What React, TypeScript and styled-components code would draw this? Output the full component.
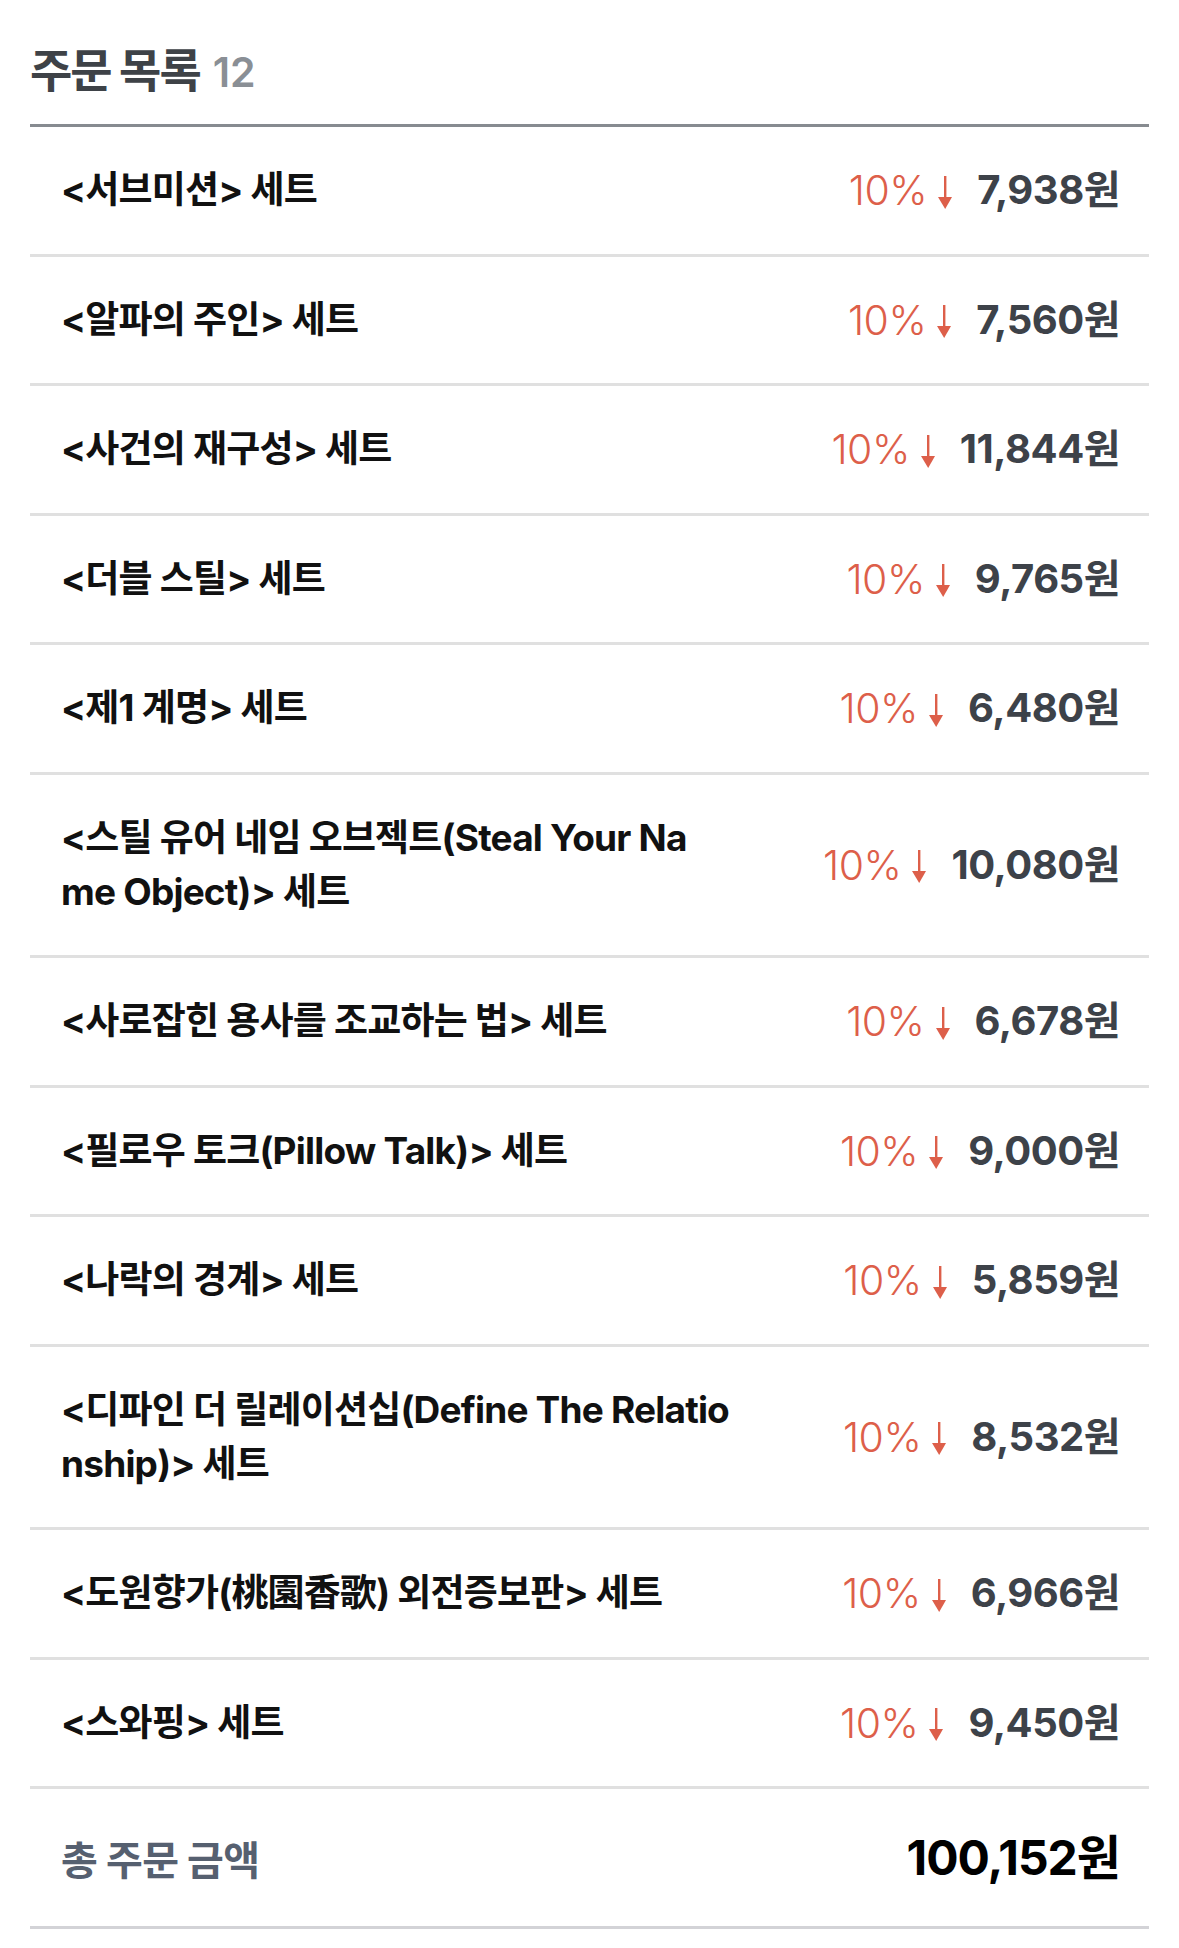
import React from "react";
import styled, { createGlobalStyle } from "styled-components";

const GlobalStyle = createGlobalStyle`
  html, body {
    margin: 0;
    padding: 0;
    background: #ffffff;
  }
  body {
    font-family: Inter, "Noto Sans CJK KR", sans-serif;
    -webkit-font-smoothing: antialiased;
  }
`;

const Page = styled.main`
  padding: 0 30px;
`;

const Header = styled.header`
  display: flex;
  align-items: baseline;
  gap: 13px;
  padding: 36px 0 21px;
  border-bottom: 3px solid #878b90;
`;

const Title = styled.h1`
  margin: 0;
  font-family: "Noto Sans CJK KR", sans-serif;
  font-weight: 700;
  font-size: 46px;
  line-height: 62px;
  letter-spacing: -2px;
  color: #3e4247;
`;

const Count = styled.span`
  font-family: Inter, "Noto Sans CJK KR", sans-serif;
  font-weight: 600;
  font-size: 41px;
  line-height: 62px;
  color: #8a8f95;
`;

const List = styled.ul`
  list-style: none;
  margin: 0;
  padding: 0;
`;

const Row = styled.li`
  display: flex;
  align-items: center;
  gap: 108px;
  padding: 36.25px 29px 36.25px 31px;
  border-bottom: 3px solid #e0e0e0;
`;

const ItemTitle = styled.span`
  flex: 1;
  min-width: 0;
  word-break: break-all;
  font-family: Inter, "Noto Sans CJK KR", sans-serif;
  font-weight: 700;
  font-size: 37px;
  line-height: 54px;
  letter-spacing: -0.8px;
  color: #111111;
`;

const PriceGroup = styled.div`
  flex-shrink: 0;
  display: flex;
  align-items: center;
  height: 54px;
  line-height: 54px;
`;

const Discount = styled.span`
  font-family: Inter, sans-serif;
  font-weight: 350;
  font-size: 41px;
  letter-spacing: -0.5px;
  color: #dd5f4a;
`;

const ArrowIcon = styled.svg`
  width: 14px;
  height: 33px;
  margin: 4px 25px 0 11px;
  flex-shrink: 0;
`;

const Price = styled.span`
  font-family: Inter, "Noto Sans CJK KR", sans-serif;
  font-weight: 700;
  font-size: 40px;
  letter-spacing: -0.5px;
  color: #3d4249;
`;

const TotalRow = styled.div`
  display: flex;
  align-items: center;
  justify-content: space-between;
  height: 54px;
  padding: 41.5px 29px 41.5px 31px;
  border-bottom: 3px solid #d3d3d7;
`;

const TotalLabel = styled.span`
  font-family: "Noto Sans CJK KR", sans-serif;
  font-weight: 700;
  font-size: 40px;
  line-height: 54px;
  letter-spacing: -0.5px;
  color: #566070;
`;

const TotalValue = styled.span`
  font-family: Inter, "Noto Sans CJK KR", sans-serif;
  font-weight: 700;
  font-size: 48px;
  line-height: 54px;
  letter-spacing: -1px;
  color: #000000;
`;

const DownArrow = () => (
  <ArrowIcon viewBox="0 0 14 33" aria-hidden="true">
    <rect x="6" y="0" width="2.4" height="24" fill="#dd5f4a" />
    <polygon points="0,21 14,21 7.2,33" fill="#dd5f4a" />
  </ArrowIcon>
);

type Item = { title: string; price: number };

const items: Item[] = [
  { title: "<서브미션> 세트", price: 7938 },
  { title: "<알파의 주인> 세트", price: 7560 },
  { title: "<사건의 재구성> 세트", price: 11844 },
  { title: "<더블 스틸> 세트", price: 9765 },
  { title: "<제1 계명> 세트", price: 6480 },
  { title: "<스틸 유어 네임 오브젝트(Steal Your Name Object)> 세트", price: 10080 },
  { title: "<사로잡힌 용사를 조교하는 법> 세트", price: 6678 },
  { title: "<필로우 토크(Pillow Talk)> 세트", price: 9000 },
  { title: "<나락의 경계> 세트", price: 5859 },
  { title: "<디파인 더 릴레이션십(Define The Relationship)> 세트", price: 8532 },
  { title: "<도원향가(桃園香歌) 외전증보판> 세트", price: 6966 },
  { title: "<스와핑> 세트", price: 9450 },
];

const won = (n: number) => `${n.toLocaleString("en-US")}원`;

export default function App() {
  const total = items.reduce((s, i) => s + i.price, 0);
  return (
    <>
      <GlobalStyle />
      <Page>
        <Header>
          <Title>주문 목록</Title>
          <Count>{items.length}</Count>
        </Header>
        <List>
          {items.map((item) => (
            <Row key={item.title}>
              <ItemTitle>{item.title}</ItemTitle>
              <PriceGroup>
                <Discount>10%</Discount>
                <DownArrow />
                <Price>{won(item.price)}</Price>
              </PriceGroup>
            </Row>
          ))}
        </List>
        <TotalRow>
          <TotalLabel>총 주문 금액</TotalLabel>
          <TotalValue>{won(total)}</TotalValue>
        </TotalRow>
      </Page>
    </>
  );
}
